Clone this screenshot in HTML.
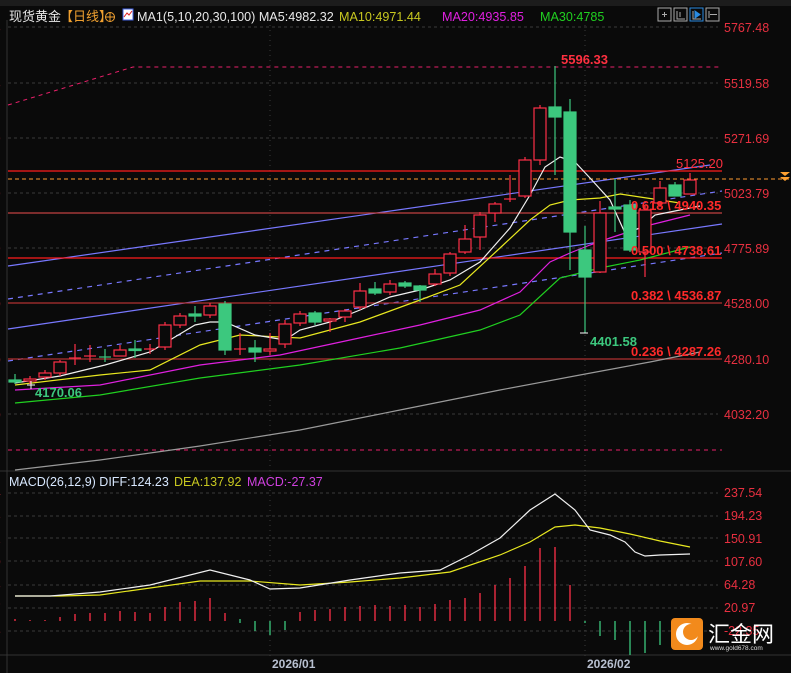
<!DOCTYPE html>
<html><head><meta charset="utf-8"><style>
html,body{margin:0;padding:0;background:#0a0a0a;}
body{width:791px;height:673px;overflow:hidden;position:relative;font-family:"Liberation Sans","Noto Sans CJK SC",sans-serif;}
svg{position:absolute;left:0;top:0;}
text{font-family:"Liberation Sans","Noto Sans CJK SC",sans-serif;}
</style></head><body>
<svg width="791" height="673" viewBox="0 0 791 673" xmlns="http://www.w3.org/2000/svg">
<rect width="791" height="673" fill="#0a0a0a"/>
<rect width="791" height="6" fill="#1c1c1c"/>
<line x1="7" y1="20" x2="7" y2="673" stroke="#333"/>
<line x1="0" y1="471" x2="791" y2="471" stroke="#333"/>
<line x1="0" y1="655" x2="791" y2="655" stroke="#333"/>
<g stroke="#3a3a3a" stroke-dasharray="3,3">
<line x1="8" y1="27" x2="718" y2="27"/><line x1="8" y1="83" x2="718" y2="83"/><line x1="8" y1="138" x2="718" y2="138"/><line x1="8" y1="193" x2="718" y2="193"/><line x1="8" y1="248" x2="718" y2="248"/><line x1="8" y1="414" x2="718" y2="414"/>
<line x1="8" y1="493" x2="718" y2="493"/><line x1="8" y1="516" x2="718" y2="516"/><line x1="8" y1="538" x2="718" y2="538"/><line x1="8" y1="561" x2="718" y2="561"/><line x1="8" y1="585" x2="718" y2="585"/><line x1="8" y1="608" x2="718" y2="608"/><line x1="8" y1="631" x2="718" y2="631"/>
<line x1="270" y1="20" x2="270" y2="660" stroke-dasharray="1,4"/><line x1="585" y1="20" x2="585" y2="660" stroke-dasharray="1,4"/>
</g>
<g stroke="#e8206a" stroke-dasharray="4,4" fill="none">
<polyline points="8,105 133,67 722,67"/>
<line x1="8" y1="450" x2="722" y2="450"/>
</g>
<g stroke="#7878ff" stroke-width="1.2" fill="none">
<line x1="8" y1="266" x2="710" y2="165"/>
<line x1="8" y1="329" x2="722" y2="224"/>
<line x1="8" y1="299" x2="722" y2="191" stroke-dasharray="5,5"/>
<line x1="8" y1="361" x2="722" y2="253" stroke-dasharray="5,5"/>
</g>
<g stroke="#ff1c1c" stroke-width="1.2">
<line x1="8" y1="171" x2="722" y2="171"/>
<line x1="8" y1="213" x2="722" y2="213" stroke="#c04040"/>
<line x1="8" y1="258" x2="722" y2="258"/>
<line x1="8" y1="303" x2="722" y2="303" stroke="#b03030"/>
<line x1="8" y1="359" x2="722" y2="359" stroke="#b03030"/>
</g>
<line x1="8" y1="179" x2="791" y2="179" stroke="#ff9a30" stroke-dasharray="4,3"/>
<path d="M780 172 h10 l-5 4z M780 177 h10 l-5 4z" fill="#ffa030"/>
<g fill="none" stroke-width="1.2">
<polyline stroke="#9a9a9a" points="15,470 100,460 200,446 300,430 400,410 500,390 580,375 650,362 700,352"/>
<polyline stroke="#20d020" points="15,403 100,395 200,378 300,365 400,348 480,330 520,315 560,278 600,268 640,260 690,247"/>
<polyline stroke="#e020e0" points="15,390 100,385 200,365 280,355 350,340 420,325 480,310 520,292 550,262 570,253 590,245 610,238 650,225 690,215"/>
<polyline stroke="#e8e820" points="15,385 100,375 150,370 200,345 240,335 300,338 360,322 420,300 460,285 500,248 530,220 550,205 570,200 600,198 620,194 640,197 660,200 680,203"/>
<polyline stroke="#f0f0f0" points="15,383 60,376 105,365 150,352 195,325 210,322 225,322 255,335 285,340 300,330 330,322 360,310 390,297 420,290 450,280 480,262 510,228 530,195 545,167 560,157 575,162 590,178 610,200 625,233 640,228 655,215 670,212 690,208 700,206"/>
</g>
<g stroke="#ff3048" fill="#0a0a0a" stroke-width="1.2">
<line x1="30" y1="376" x2="30" y2="384"/><rect x="24" y="379" width="12" height="2"/>
<line x1="45" y1="370" x2="45" y2="380"/><rect x="39" y="373" width="12" height="4"/>
<line x1="60" y1="360" x2="60" y2="376"/><rect x="54" y="362" width="12" height="11"/>
<line x1="75" y1="344" x2="75" y2="365"/><line x1="69" y1="358" x2="81" y2="358"/>
<line x1="90" y1="345" x2="90" y2="362"/><line x1="84" y1="356" x2="96" y2="356"/>
<rect x="114" y="350" width="12" height="6"/><line x1="120" y1="345" x2="120" y2="350"/>
<line x1="150" y1="344" x2="150" y2="354"/><line x1="144" y1="349" x2="156" y2="349"/>
<line x1="165" y1="322" x2="165" y2="350"/><rect x="159" y="325" width="12" height="22"/>
<line x1="180" y1="313" x2="180" y2="328"/><rect x="174" y="316" width="12" height="9"/>
<line x1="210" y1="303" x2="210" y2="318"/><rect x="204" y="306" width="12" height="9"/>
<line x1="240" y1="333" x2="240" y2="355"/><line x1="234" y1="349" x2="246" y2="349"/>
<line x1="270" y1="333" x2="270" y2="355"/><rect x="264" y="349" width="12" height="2"/>
<line x1="285" y1="320" x2="285" y2="348"/><rect x="279" y="324" width="12" height="20"/>
<line x1="300" y1="311" x2="300" y2="326"/><rect x="294" y="314" width="12" height="9"/>
<line x1="330" y1="318" x2="330" y2="332"/><rect x="324" y="319" width="12" height="2"/>
<line x1="345" y1="309" x2="345" y2="322"/><rect x="339" y="311" width="12" height="6"/>
<line x1="360" y1="283" x2="360" y2="310"/><rect x="354" y="291" width="12" height="16"/>
<line x1="390" y1="280" x2="390" y2="295"/><rect x="384" y="284" width="12" height="8"/>
<line x1="435" y1="269" x2="435" y2="286"/><rect x="429" y="274" width="12" height="10"/>
<line x1="450" y1="252" x2="450" y2="276"/><rect x="444" y="254" width="12" height="19"/>
<line x1="465" y1="225" x2="465" y2="254"/><rect x="459" y="239" width="12" height="13"/>
<line x1="480" y1="212" x2="480" y2="250"/><rect x="474" y="215" width="12" height="22"/>
<line x1="495" y1="202" x2="495" y2="222"/><rect x="489" y="204" width="12" height="9"/>
<line x1="510" y1="175" x2="510" y2="202"/><line x1="504" y1="199" x2="516" y2="199"/>
<line x1="525" y1="157" x2="525" y2="198"/><rect x="519" y="160" width="12" height="36"/>
<line x1="540" y1="105" x2="540" y2="165"/><rect x="534" y="108" width="12" height="52"/>
<line x1="600" y1="201" x2="600" y2="273"/><rect x="594" y="213" width="12" height="59"/>
<line x1="645" y1="205" x2="645" y2="277"/><rect x="639" y="210" width="12" height="42"/>
<line x1="660" y1="181" x2="660" y2="207"/><rect x="654" y="188" width="12" height="15"/>
<line x1="690" y1="173" x2="690" y2="194"/><rect x="684" y="180" width="12" height="14"/>
</g>
<g stroke="#3cc87e" fill="#3cc87e" stroke-width="1.2">
<line x1="15" y1="374" x2="15" y2="384"/><rect x="9" y="380" width="12" height="2"/>
<line x1="105" y1="349" x2="105" y2="362"/><line x1="99" y1="357" x2="111" y2="357"/>
<line x1="135" y1="340" x2="135" y2="358"/><rect x="129" y="349" width="12" height="1.5"/>
<line x1="195" y1="306" x2="195" y2="322"/><rect x="189" y="314" width="12" height="2"/>
<line x1="225" y1="301" x2="225" y2="355"/><rect x="219" y="304" width="12" height="46"/>
<line x1="255" y1="340" x2="255" y2="362"/><rect x="249" y="348" width="12" height="4"/>
<line x1="315" y1="311" x2="315" y2="325"/><rect x="309" y="313" width="12" height="9"/>
<line x1="375" y1="282" x2="375" y2="295"/><rect x="369" y="289" width="12" height="4"/>
<line x1="405" y1="281" x2="405" y2="288"/><rect x="399" y="283" width="12" height="3"/>
<line x1="420" y1="285" x2="420" y2="302"/><rect x="414" y="286" width="12" height="4"/>
<line x1="555" y1="66" x2="555" y2="175"/><rect x="549" y="107" width="12" height="10"/>
<line x1="570" y1="99" x2="570" y2="270"/><rect x="564" y="112" width="12" height="120"/>
<line x1="585" y1="226" x2="585" y2="333"/><rect x="579" y="250" width="12" height="27"/>
<line x1="615" y1="179" x2="615" y2="232"/><rect x="609" y="207" width="12" height="2"/>
<line x1="630" y1="200" x2="630" y2="252"/><rect x="624" y="205" width="12" height="45"/>
<line x1="675" y1="182" x2="675" y2="196"/><rect x="669" y="185" width="12" height="11"/>
</g>
<path d="M27 385 h8 M31 381 v8 M580 333 h8" stroke="#fff"/>
<g font-size="13" fill="#ff2a2a" font-weight="bold">
<text x="561" y="64" fill="#ff3040">5596.33</text>
<text x="676" y="168" fill="#ff3040" font-weight="normal">5125.20</text>
<text x="631" y="210">0.618 \ 4940.35</text>
<text x="631" y="255">0.500 \ 4738.61</text>
<text x="631" y="300">0.382 \ 4536.87</text>
<text x="631" y="356">0.236 \ 4287.26</text>
<text x="590" y="346" fill="#3cc87e">4401.58</text>
<text x="35" y="397" fill="#3cc87e">4170.06</text>
</g>
<g font-size="12.5" fill="#e83040">
<text x="724" y="32">5767.48</text><text x="724" y="88">5519.58</text><text x="724" y="143">5271.69</text><text x="724" y="198">5023.79</text><text x="724" y="253">4775.89</text><text x="724" y="308">4528.00</text><text x="724" y="364">4280.10</text><text x="724" y="419">4032.20</text>
<text x="724" y="497">237.54</text><text x="724" y="520">194.23</text><text x="724" y="543">150.91</text><text x="724" y="566">107.60</text><text x="724" y="589">64.28</text><text x="724" y="612">20.97</text><text x="724" y="635">-22.35</text>
</g>
<g font-size="12" fill="#e83040">
<text x="-6" y="32">8</text><text x="-6" y="88">8</text><text x="-6" y="143">9</text><text x="-6" y="198">9</text><text x="-6" y="253">9</text><text x="-6" y="308">0</text><text x="-6" y="364">0</text><text x="-6" y="419">0</text>
<text x="-6" y="497">4</text><text x="-6" y="520">3</text><text x="-6" y="543">1</text><text x="-6" y="566">0</text><text x="-6" y="589">8</text><text x="-6" y="612">7</text><text x="-6" y="635">5</text>
</g>
<text x="9" y="21" font-size="13" fill="#e8e8e8">现货黄金</text>
<text x="60" y="21" font-size="13" fill="#f0a030">【日线】</text>
<circle cx="110" cy="17" r="4.5" fill="none" stroke="#f0a030"/><path d="M105 17h10M110 12v10" stroke="#f0a030"/>
<rect x="123" y="9" width="10" height="11" fill="#fff" stroke="#4060e0"/><path d="M124 17l3-4 2 2 3-4" stroke="#e02020" fill="none"/>
<text x="137" y="21" font-size="12.6" fill="#e8e8e8">MA1(5,10,20,30,100) MA5:4982.32</text>
<text x="339" y="21" font-size="12.6" fill="#c8c820">MA10:4971.44</text>
<text x="442" y="21" font-size="12.6" fill="#e020e0">MA20:4935.85</text>
<text x="540" y="21" font-size="12.6" fill="#20d020">MA30:4785</text>
<g fill="none" stroke="#aaa" stroke-width="1">
<rect x="658" y="8" width="13" height="13"/><rect x="674" y="8" width="13" height="13"/><rect x="690" y="8" width="13" height="13" stroke="#2a8ae0"/><rect x="706" y="8" width="13" height="13"/>
<path d="M662 14.5h5M664.5 12v5M677 11v8h8M680 12v5M693 11v8h8" /><path d="M695 11l5 3.5-5 3.5z" fill="#2a8ae0" stroke="#2a8ae0"/><path d="M709 11v7M710 14.5h7"/>
</g>
<text x="9" y="486" font-size="12.5" fill="#d8e8ff">MACD(26,12,9) DIFF:124.23</text>
<text x="174" y="486" font-size="12.5" fill="#c8c820">DEA:137.92</text>
<text x="247" y="486" font-size="12.5" fill="#d040e0">MACD:-27.37</text>
<g stroke="#ff3048" stroke-width="1.3">
<path d="M15 619v2M30 620v1M45 620v1M60 617v4M75 614v7M90 613v8M105 613v8M120 611v10M135 612v9M150 613v8M165 607v14M180 602v19M195 601v20M210 598v23M225 613v8M300 612v9M315 610v11M330 609v12M345 607v14M360 606v15M375 605v16M390 606v15M405 605v16M420 607v14M435 604v17M450 600v21M465 598v23M480 593v28M495 585v36M510 578v43M525 566v55M540 548v73M555 547v74M570 585v36"/>
</g>
<g stroke="#3cc87e" stroke-width="1.3">
<path d="M240 619v4M255 621v10M270 621v14M285 621v9M585 621v2M600 621v15M615 621v19M630 621v34M645 621v32M660 621v24"/>
</g>
<polyline fill="none" stroke="#e8e820" stroke-width="1.2" points="15,596 60,596 100,595 200,581 250,581 300,585 350,582 400,578 450,572 500,555 530,542 555,527 575,525 600,528 630,534 660,541 690,547"/>
<polyline fill="none" stroke="#f0f0f0" stroke-width="1.2" points="15,596 50,596 100,592 150,585 210,570 250,580 270,589 300,588 350,580 400,573 440,570 470,555 500,538 530,510 555,494 575,510 590,530 610,535 625,542 635,552 645,556 660,555 690,554"/>
<text x="272" y="668" font-size="12" fill="#b8c0d0" font-weight="bold">2026/01</text>
<text x="587" y="668" font-size="12" fill="#b8c0d0" font-weight="bold">2026/02</text>
<rect x="671" y="618" width="32" height="32" rx="4" fill="#f28a1c"/>
<circle cx="687" cy="634" r="11" fill="#fff"/><circle cx="691" cy="632" r="8" fill="#f28a1c"/>
<text x="708" y="642" font-size="22" fill="#fff" font-family="Noto Sans CJK SC,sans-serif">汇金网</text>
<text x="710" y="650" font-size="6.5" fill="#ddd">www.gold678.com</text>
</svg>
</body></html>
